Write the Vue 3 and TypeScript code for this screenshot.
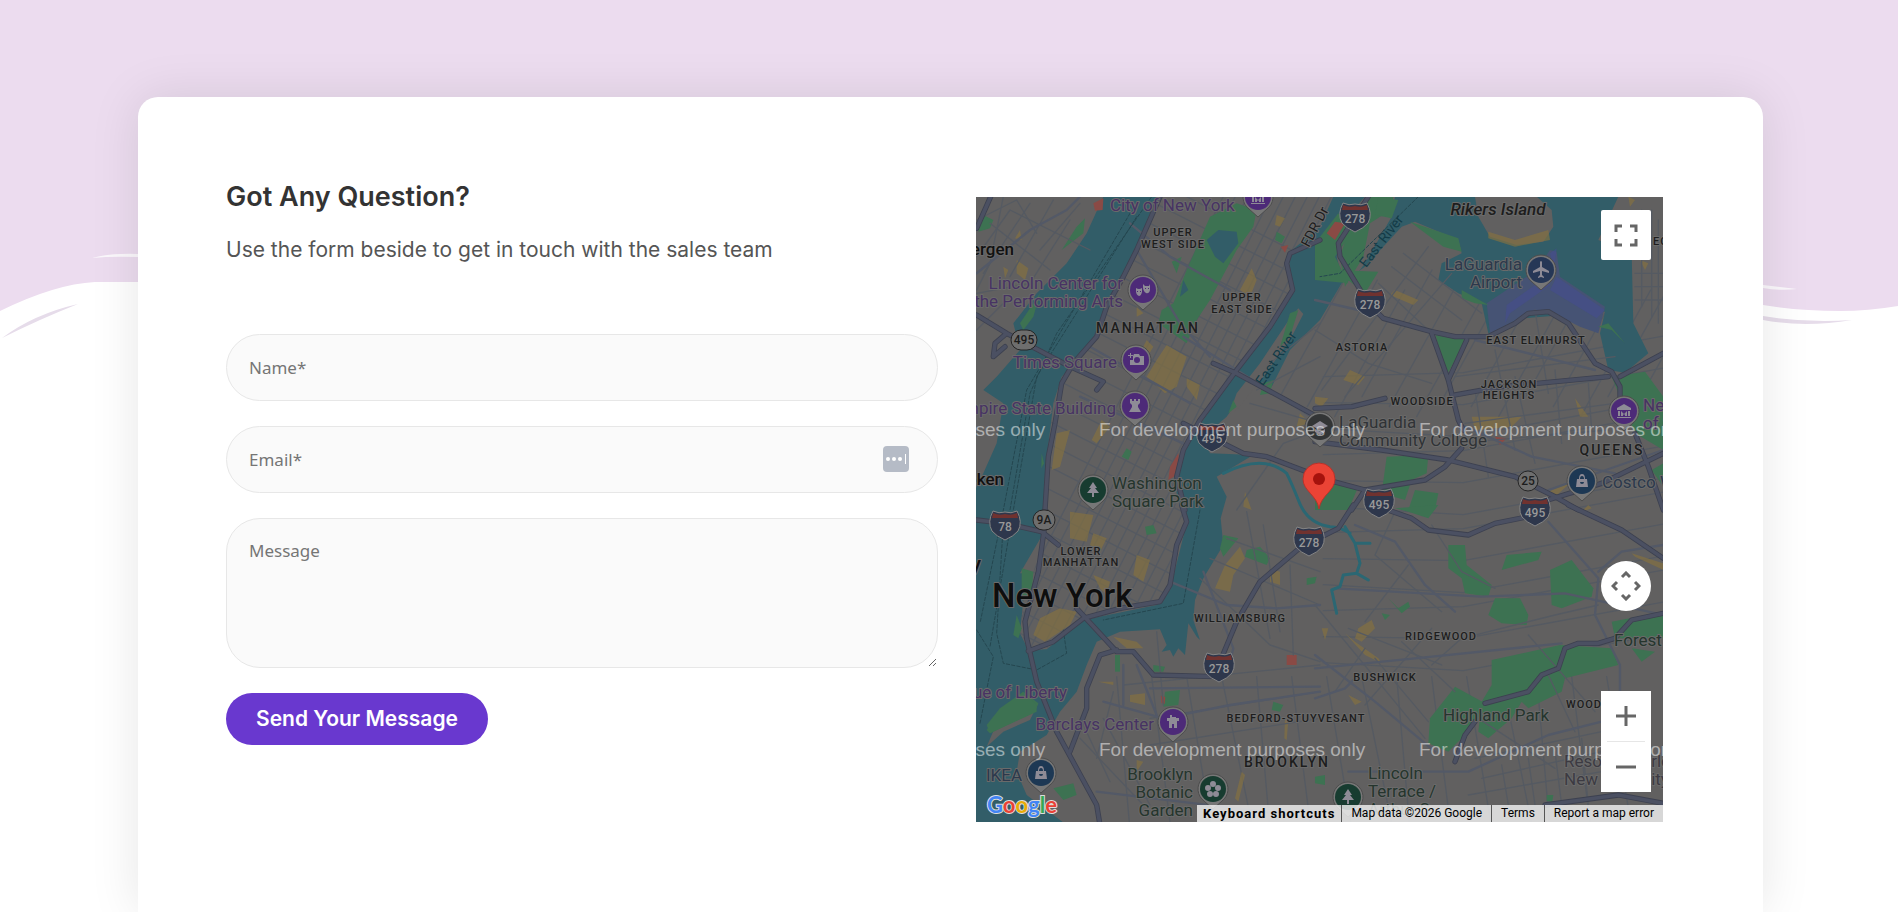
<script setup lang="ts">
import { ref } from 'vue'

interface Label {
  t: string[]
  x: number
  y: number
  k: string
  a?: 'start' | 'middle' | 'end'
  h?: number
  r?: number
}
interface Tile {
  x: number
  y: number
  parks: string[]
  sand: string[]
  red: string[]
  streets: string[]
  roads: string[]
  highways: string[]
}

const name = ref('')
const email = ref('')
const message = ref('')

const water = [
  'M400 20 L350 130 290 220 200 310 130 400 150 480 80 560 40 600 100 640 80 760 40 850 0 930 0 1905 290 1905 170 1815 140 1745 150 1685 230 1635 270 1565 320 1505 350 1425 380 1355 450 1325 570 1318 590 1365 575 1385 600 1380 610 1400 625 1375 645 1395 655 1300 640 1275 680 1340 690 1350 670 1290 675 1230 700 1165 760 1065 752 985 770 920 740 860 850 795 720 790 700 740 770 680 850 565 905 590 960 480 1050 390 1115 280 1185 230 1295 110 1335 95 1465 150 1475 190 1415 220 1405 270 1465 310 1535 340 1555 430 1655 385 1905 365 1890 430 1915 540 1965 548 2035 490 1990 400 1985 190 1885 150 1945 20 1090 20 1050 110 955 190 968 300 900 400 800 540 700 690 640 770 610 880 650 1000 600 1200 560 1245 340 1290 230 1378 175 1380 150 1330 160 1230 190 1150 150 1150 220 1030 225 850 250 640 275 560 360 470 400 370 470 250 500 170 560 20 Z'
]
const islands = [
  'M778 672 L800 610 870 520 950 400 985 355 1000 372 960 450 880 560 800 660 Z',
  'M1125 90 L1185 20 1275 20 1265 80 1185 220 1125 300 1100 200 Z',
  'M1515 20 L1525 80 1560 140 1640 165 1720 155 1750 110 1745 60 1700 20 Z',
  'M50 1670 L80 1600 150 1530 205 1540 180 1590 100 1625 Z'
]
const manhattan =
  'M560 20 L500 170 470 250 400 370 360 470 275 560 250 640 225 850 220 1030 190 1150 160 1230 150 1330 175 1380 230 1378 340 1290 560 1245 600 1200 650 1000 610 880 640 770 700 690 800 540 900 400 968 300 955 190 1050 110 1090 20 Z'

const avenues = Array.from({ length: 26 }, (_, i) => `M${60 + i * 36} 1400 L${770 + i * 36} 0`)
const crossStreets = Array.from({ length: 25 }, (_, i) => `M100 ${-260 + i * 68} l1100 560`)
const eastStreets = Array.from({ length: 15 }, (_, i) => `M${930 + i * 82} ${620 + (i % 3) * 30} l210 -380`)
const southStreets = Array.from({ length: 15 }, (_, i) => `M${440 + i * 105} 1460 l${40 + (i % 4) * 18} 460`)
const queensStreets = Array.from({ length: 12 }, (_, i) => `M1060 ${560 + i * 78} l420 ${(i % 3) * 18 - 12} 600 -110`)

const tiles: Tile[] = [
  {
    x: 0, y: 0,
    parks: ['M720 80 L800 40 860 60 850 110 800 180 720 330 680 390 650 460 565 400 575 360 610 340 650 240 Z', 'M605 215 L635 200 620 250 Z', 'M40 75 L70 90 60 115 25 125 Z', 'M345 85 L340 130 275 180 320 110 Z', 'M210 310 L190 380 160 420 150 400 Z', 'M470 775 L485 785 475 810 455 800 Z', 'M880 580 L910 570 900 610 870 615 Z', 'M790 630 L800 650 775 670 Z', 'M215 790 L222 820 214 835 Z', 'M920 125 l25 15 -10 20 -20 -10 Z'],
    sand: ['M530 450 L550 470 530 505 510 490 Z', 'M590 465 L650 500 620 590 585 610 530 560 560 510 Z', 'M650 565 L690 585 680 630 650 590 Z', 'M845 235 L860 270 840 320 810 300 Z', 'M920 75 L945 85 930 110 915 105 Z', 'M140 210 L175 235 165 270 140 250 Z', 'M260 730 L300 720 270 830 245 840 Z', 'M150 120 L155 150 135 145 Z', 'M395 690 L420 710 380 760 365 750 Z', 'M990 670 L1020 700 980 710 Z', 'M500 350 L520 370 500 380 Z', 'M825 905 L845 960 820 950 Z', 'M100 230 L115 240 105 265 Z'],
    red: ['M370 40 L400 25 398 60 375 62 Z', 'M625 790 L630 850 595 870 600 830 Z', 'M932 170 L955 165 945 188 Z'],
    streets: ['M20 200 L120 60 360 180', 'M60 100 L240 240 M20 310 L180 280 300 90', 'M20 90 L140 30 200 130 M100 20 L60 220 20 300', 'M840 640 L1050 700 M900 520 L1050 400 M860 600 L1050 500', 'M800 960 L940 760 1050 720', 'M40 250 L180 40 M20 420 L110 330 M250 30 L120 260 M330 40 L210 180'],
    roads: ['M640 440 L1040 690', 'M480 100 L600 200 780 300', 'M500 180 L630 400 720 500', 'M360 470 L660 640 M330 620 L640 760', 'M20 250 L180 120 290 60 330 20'],
    highways: ['M62 20 L20 115', 'M20 375 L110 430 300 530 400 575 380 600 M110 430 L75 460 70 500 105 470', 'M570 20 L535 100 500 180 460 260 410 350 380 440 310 520 275 580 255 700 235 800 225 960', 'M1050 150 L960 190 950 220 968 300 900 410 800 540 690 690 640 780 620 860 645 960', 'M730 520 L800 550 1060 690', 'M640 700 L820 790 890 800 1050 860']
  },
  {
    x: 1035, y: 0,
    parks: ['M0 160 L70 70 110 130 60 200 100 280 0 270 Z', 'M190 20 L250 30 230 85 180 75 Z', 'M360 430 L455 450 395 555 Z', 'M285 95 L430 145 440 185 385 170 Z', 'M440 300 L520 345 480 340 440 325 Z', 'M215 800 L340 795 335 850 290 870 270 930 200 910 Z', 'M0 870 L130 890 100 960 0 960 Z', 'M890 560 L990 545 1045 620 1045 780 960 730 Z', 'M850 410 L880 400 930 460 890 420 Z', 'M1010 840 L1045 820 1045 890 Z', 'M300 900 L370 910 360 960 280 960 Z', 'M60 240 L190 245 150 310 Z'],
    sand: ['M240 300 L310 330 295 345 225 315 Z', 'M105 540 L150 560 130 585 85 570 Z', 'M470 680 L620 680 590 710 480 720 Z', 'M780 625 L820 680 795 680 Z', 'M520 125 L600 150 700 120 705 150 600 170 520 145 Z', 'M0 620 L40 625 20 650 0 640 Z', 'M975 210 L1000 220 990 240 Z', 'M940 20 L960 30 945 50 Z', 'M700 905 L765 880 720 920 Z'],
    red: ['M60 95 L90 100 60 150 35 130 Z', 'M540 740 L575 745 555 765 Z'],
    streets: ['M190 280 L350 430 M230 230 L440 390 M265 190 L500 370', 'M20 600 L340 170 M90 620 L410 250', 'M420 560 L900 500 M450 700 L900 640 M420 760 L880 720', 'M480 600 L520 860 M600 560 L660 820 M720 540 L740 760 M820 580 L830 720', 'M960 250 L1045 250 M960 290 L1045 290 M980 60 L980 350 M1010 60 L1010 380 M1030 90 L1030 400 M960 330 L1045 330', 'M0 420 L160 520 350 580 M540 480 L600 780 M660 360 L700 610'],
    roads: ['M480 450 L840 540', 'M0 330 L130 360', 'M430 700 L650 800 900 850', 'M0 740 L120 700 M700 900 L1045 780'],
    highways: ['M160 20 L70 160 75 200 160 340 205 385 350 425 420 440 520 440 600 400 640 370 700 365 760 400 840 520 890 545 915 590 915 640', 'M915 560 L1045 490', 'M350 430 L400 570 430 690 445 720 M455 450 L400 570', 'M0 655 L110 650 210 625 M420 615 L560 590 880 560', 'M0 755 L200 780 400 810 600 860 720 920 790 960', 'M0 860 L150 900 330 870 390 830 440 775', 'M150 900 L110 960 M650 945 L860 880 1045 790 M960 730 L1000 830 1045 960']
  },
  {
    x: 0, y: 945,
    parks: ['M760 90 L805 100 760 155 750 130 Z', 'M830 135 L870 125 900 160 890 180 825 155 Z', 'M525 65 L550 60 560 85 530 90 Z', 'M50 660 L90 610 160 560 200 600 200 620 60 685 Z', 'M585 560 L630 555 625 600 580 605 Z', 'M140 330 L155 370 145 400 130 390 Z', 'M250 850 L310 835 320 870 280 885 Z', 'M435 450 L450 450 450 500 435 500 Z', 'M1010 220 L1040 215 1035 235 1010 240 Z', 'M910 590 L940 600 930 620 905 615 Z', 'M155 190 L190 200 185 270 155 280 Z', 'M550 480 L585 485 580 500 550 500 Z'],
    sand: ['M300 20 L370 30 350 110 300 100 Z', 'M270 310 L320 320 300 360 225 410 190 390 210 340 Z', 'M810 125 L825 160 790 210 780 260 735 250 765 180 Z', 'M500 150 L540 165 520 230 490 210 Z', 'M430 395 L500 410 520 430 470 430 Z', 'M480 570 L525 565 525 600 480 590 Z', 'M900 190 L930 200 930 240 900 230 Z', 'M370 210 L420 230 410 270 390 250 Z', 'M815 800 L825 810 805 890 795 880 Z', 'M385 530 L430 530 430 540 Z', 'M945 640 L955 645 950 705 943 700 Z', 'M370 85 L410 100 390 140 360 120 Z', 'M500 765 L520 770 500 800 Z'],
    red: ['M950 450 L980 450 980 480 950 480 Z', 'M572 572 L586 576 584 597 574 594 Z'],
    streets: ['M690 220 L900 420 1050 470', 'M720 160 L1050 300 M770 100 L1050 200', 'M460 540 L1050 480 M540 640 L1050 560 M540 720 L1050 640 M340 660 L420 830 M400 640 L540 900', 'M830 20 L900 400 M960 180 L970 450 M880 60 L930 380', 'M330 700 L520 900 M430 560 L380 760 M560 380 L580 600'],
    roads: ['M600 230 L770 300 920 310 1050 300', 'M700 200 L790 430 770 510', 'M460 480 L460 600 M500 480 L560 630', 'M540 550 L1050 545 M400 590 L580 640 780 600 1050 560', 'M380 860 L1050 940'],
    highways: ['M20 45 L105 55 215 80 265 120', 'M230 20 L205 200 165 350 170 400 200 530 260 680 380 900 390 960', 'M635 0 L650 50 620 120 600 240 570 290 450 310 340 340 250 410 175 438', 'M1000 120 L870 230 800 350 750 470', 'M320 310 L440 440 490 440 550 510 740 515', 'M440 435 L390 450 350 550 350 610 300 740']
  },
  {
    x: 1035, y: 945,
    parks: ['M400 120 L450 120 455 180 530 240 520 275 450 265 440 220 400 190 Z', 'M575 150 L680 140 670 165 560 195 Z', 'M705 195 L770 165 835 250 830 275 740 310 710 300 Z', 'M540 280 L615 280 640 330 635 360 560 355 520 330 Z', 'M530 465 L735 420 890 430 910 480 750 520 740 560 640 610 620 590 590 640 520 700 490 680 500 590 530 540 Z', 'M420 545 L520 600 440 700 400 740 340 715 345 640 Z', 'M890 350 L1045 320 1045 400 900 400 Z', 'M220 280 L250 310 280 290 285 305 260 325 Z', 'M0 815 L30 810 30 840 0 835 Z', 'M950 430 L1020 440 980 470 Z', 'M200 325 L225 330 210 345 Z', 'M240 10 L370 0 340 40 280 20 Z', 'M695 870 L715 870 712 890 695 888 Z'],
    sand: ['M130 370 L170 345 180 370 140 410 120 400 Z', 'M90 385 L120 410 190 460 200 475 150 450 Z', 'M20 370 L40 370 30 405 Z', 'M950 145 L1045 175 1045 195 960 155 Z', 'M100 570 L140 590 120 600 Z', 'M800 20 L820 0 830 10 Z'],
    red: [],
    streets: ['M350 480 L440 400 720 330 850 300', 'M280 180 L150 350 M350 60 L440 200 540 250', 'M0 300 L330 700 M100 370 L380 480 M150 430 L60 560 M350 370 L150 600', 'M480 760 L860 680 M500 820 L860 740 M460 870 L860 800', 'M640 390 L840 620 M700 510 L780 680 M490 640 L720 790', 'M180 460 L340 650 M260 410 L420 560 M240 20 L180 150 380 320', 'M560 780 L580 900 M640 760 L660 900 M720 740 L740 900 M800 700 L820 900'],
    roads: ['M60 250 L500 275 750 265 1045 330', 'M0 490 L300 460 740 415', 'M120 60 L240 110 330 240 420 320', 'M700 50 L850 220 840 330 915 480 915 600', 'M0 450 L180 590 360 740', 'M100 800 L460 800 700 690 860 650', 'M0 580 L90 550 120 520', 'M850 200 L920 140 1045 120'],
    highways: ['M0 105 L70 70 115 0', 'M190 5 L290 40 340 75 460 90 540 55 640 35', 'M760 0 L920 75 1045 160', 'M1045 325 L950 345 900 400 850 415 790 415 750 430 730 490 680 510 640 560 510 595 M480 650 L450 690 420 770', 'M690 900 L910 870 1045 895']
  }
]

const L = (k: string, x: number, y: number, t: string[], a: Label['a'] = 'start', h = 18, r = 0): Label => ({ k, x, y, t, a, h, r })
const labels: Label[] = [
  L('poi purple', 134, 14, ['City of New York']),
  L('area', 197, 39, ['UPPER', 'WEST SIDE'], 'middle', 12),
  L('city', 38, 58, ['Bergen'], 'end'),
  L('poi purple', 147, 92, ['Lincoln Center for', 'the Performing Arts'], 'end'),
  L('boro', 172, 136, ['MANHATTAN'], 'middle'),
  L('poi purple', 141, 171, ['Times Square'], 'end'),
  L('poi purple', 140, 217, ['Empire State Building'], 'end'),
  L('area', 266, 104, ['UPPER', 'EAST SIDE'], 'middle', 12),
  L('river', 304, 164, ['East River'], 'middle', 0, -56),
  L('river', 409, 47, ['East River'], 'middle', 0, -52),
  L('lane', 343, 32, ['FDR Dr'], 'middle', 0, -62),
  L('poi green', 136, 292, ['Washington', 'Square Park']),
  L('city', 28, 288, ['Hoboken'], 'end'),
  L('poi gray', 363, 231, ['LaGuardia', 'Community College']),
  L('island', 522, 18, ['Rikers Island'], 'middle'),
  L('poi blue', 546, 73, ['LaGuardia', 'Airport'], 'end'),
  L('area', 560, 147, ['EAST ELMHURST'], 'middle'),
  L('area', 386, 154, ['ASTORIA'], 'middle'),
  L('area', 533, 191, ['JACKSON', 'HEIGHTS'], 'middle', 11),
  L('area', 446, 208, ['WOODSIDE'], 'middle'),
  L('boro', 636, 258, ['QUEENS'], 'middle'),
  L('area', 677, 48, ['ECHO']),
  L('poi purple', 667, 214, ['New York Hall', 'of Science']),
  L('poi blue', 626, 291, ['Costco Wholesale']),
  L('area', 105, 358, ['LOWER', 'MANHATTAN'], 'middle', 11),
  L('town', 5, 374, ['Jersey City'], 'end'),
  L('metro', 16, 410, ['New York']),
  L('area', 264, 425, ['WILLIAMSBURG'], 'middle'),
  L('poi purple', 91, 501, ['Statue of Liberty'], 'end'),
  L('poi purple', 178, 533, ['Barclays Center'], 'end'),
  L('area', 320, 525, ['BEDFORD-STUYVESANT'], 'middle'),
  L('boro', 311, 570, ['BROOKLYN'], 'middle'),
  L('poi blue', 46, 584, ['IKEA'], 'end'),
  L('poi green', 217, 583, ['Brooklyn', 'Botanic', 'Garden'], 'end'),
  L('area', 465, 443, ['RIDGEWOOD'], 'middle'),
  L('area', 409, 484, ['BUSHWICK'], 'middle'),
  L('poi green', 638, 449, ['Forest Park']),
  L('poi green', 467, 524, ['Highland Park']),
  L('area', 590, 511, ['WOODHAVEN']),
  L('poi dim', 588, 570, ['Resorts World', 'New York City']),
  L('poi green', 392, 582, ['Lincoln', 'Terrace /', 'Arthur S…'])
]

const pins = [
  { x: 282, y: 0, c: '#4d2a78', i: 'museum' },
  { x: 167, y: 93, c: '#4d2a78', i: 'masks' },
  { x: 160, y: 163, c: '#4d2a78', i: 'camera' },
  { x: 159, y: 209, c: '#4d2a78', i: 'rook' },
  { x: 117, y: 293, c: '#173c30', i: 'tree' },
  { x: 344, y: 230, c: '#333536', i: 'school' },
  { x: 565, y: 73, c: '#263756', i: 'plane' },
  { x: 648, y: 214, c: '#4d2a78', i: 'museum' },
  { x: 606, y: 284, c: '#1d3854', i: 'bag' },
  { x: 65, y: 576, c: '#1d3854', i: 'bag' },
  { x: 197, y: 525, c: '#4d2a78', i: 'arena' },
  { x: 237, y: 592, c: '#173c30', i: 'flower' },
  { x: 372, y: 600, c: '#173c30', i: 'tree' }
]
const glyphs: Record<string, string> = {
  museum: 'M-7 -3 L0 -7 7 -3 V-1 H-7 Z M-6 0 H-4 V5 H-6 Z M4 0 H6 V5 H4 Z M-3 5 V0 L0 3 3 0 V5 H1 V3 L0 4 -1 3 V5 Z M-7 6 H7 V7 H-7 Z',
  masks: 'M-7 -2 Q-4 0 -1 -2 V2 Q-2 6 -4 6 Q-7 5 -7 1 Z M-6 1 h1 v1 h-1 Z M-3 1 h1 v1 h-1 Z M0 -6 L2 -4 H6 L7 -6 V0 Q6 4 3 3 Q0 1 0 -3 Z M2 -2 h1 v1 h-1 Z M5 -2 h1 v1 h-1 Z',
  camera: 'M-3 -4 L-2 -6 H3 L4 -4 H8 V5 H-6 V0 H-3 Z M-6 -7 H-5 V-5 H-3 V-4 H-5 V-2 H-6 V-4 H-8 V-5 H-6 Z M1 -3 A3 3 0 1 0 1 3 A3 3 0 1 0 1 -3 Z',
  rook: 'M-5 -7 H-3 V-5 H-1 V-7 H1 V-5 H3 V-7 H5 V-3 L3 -1 V1 L6 6 H-6 L-3 1 V-1 L-5 -3 Z',
  tree: 'M0 -8 L4 -2 H2 L6 3 H1 V7 H-1 V3 H-6 L-2 -2 H-4 Z',
  school: 'M-8 -1 L0 -6 8 -1 0 3 Z M-5 2 L0 5 5 2 V5 L0 8 -5 5 Z',
  plane: 'M-1 -8 Q0 -10 1 -8 V-3 L8 1 V3 L1 1 V5 L3 7 V8 L0 7 -3 8 V7 L-1 5 V1 L-8 3 V1 L-1 -3 Z',
  bag: 'M-5 -2 H-3 Q-3 -7 0 -7 Q3 -7 3 -2 H5 L6 6 H-6 Z M-2 -2 H2 Q2 -5 0 -5 Q-2 -5 -2 -2 Z M-2 1 H2 Q2 3 0 3 Q-2 3 -2 1 Z',
  arena: 'M-6 -4 H-3 V-7 H-1 V-5 H3 V-4 H6 V-1 H4 V6 H1 V2 H-1 V6 H-4 V-1 H-6 Z',
  flower: 'M-3 -5a3 3 0 1 0 6 0a3 3 0 1 0 -6 0Z M2 -1a3 3 0 1 0 6 0a3 3 0 1 0 -6 0Z M0 5a3 3 0 1 0 6 0a3 3 0 1 0 -6 0Z M-6 5a3 3 0 1 0 6 0a3 3 0 1 0 -6 0Z M-8 -1a3 3 0 1 0 6 0a3 3 0 1 0 -6 0Z'
}
const shields = [
  { x: 379, y: 20, n: '278' },
  { x: 394, y: 106, n: '278' },
  { x: 236, y: 240, n: '495' },
  { x: 403, y: 306, n: '495' },
  { x: 559, y: 314, n: '495' },
  { x: 29, y: 328, n: '78' },
  { x: 333, y: 344, n: '278' },
  { x: 243, y: 470, n: '278' }
]
const routes = [
  { x: 48, y: 143, w: 26, n: '495' },
  { x: 552, y: 284, w: 20, n: '25' },
  { x: 68, y: 323, w: 22, n: '9A' }
]
const marks = [-197, 123, 443]
</script>

<template>
  <main class="page">
    <svg class="wave" viewBox="0 0 1898 360" preserveAspectRatio="none" aria-hidden="true">
      <path fill="#ecdcef" d="M0 0H1898V306Q1868 311 1840 311Q1800 311 1763 305L138 282H95Q55 284 0 311Z" />
      <path fill="#fff" fill-opacity=".8" d="M92 258Q110 253 138 254V257Q112 256 92 258Z M1763 285L1797 289Q1780 291 1763 288Z" />
      <path fill="#e6dcea" d="M2 338Q34 314 78 304Q40 319 2 338Z M1763 316Q1805 323 1852 320Q1805 328 1763 320Z" />
    </svg>

    <section class="card">
      <div class="intro">
        <h2>Got Any Question?</h2>
        <p>Use the form beside to get in touch with the sales team</p>
        <form @submit.prevent>
          <input v-model="name" type="text" placeholder="Name*" aria-label="Name" />
          <div class="field">
            <input v-model="email" type="email" placeholder="Email*" aria-label="Email" />
            <button type="button" class="autofill" aria-label="Fill from password manager">
              <svg width="26" height="26" viewBox="0 0 26 26">
                <rect width="26" height="26" rx="4" fill="#b5bbc6" />
                <g fill="#fff">
                  <circle cx="5" cy="13" r="2" /><circle cx="11" cy="13" r="2" /><circle cx="17" cy="13" r="2" />
                  <rect x="22" y="8" width="1" height="10" />
                </g>
              </svg>
            </button>
          </div>
          <textarea v-model="message" placeholder="Message" aria-label="Message"></textarea>
          <button type="submit" class="send">Send Your Message</button>
        </form>
      </div>

      <div class="map">
        <svg class="canvas" viewBox="0 0 687 625" preserveAspectRatio="xMidYMid slice" role="img" aria-label="Map of New York">
          <defs>
            <clipPath id="manhattan"><path :d="manhattan" /></clipPath>
          </defs>
          <rect width="687" height="625" fill="#616060" />
          <g transform="translate(-6 -7) scale(.33333)">
            <path v-for="d in queensStreets" :key="d" :d="d" class="line street" />
            <path v-for="d in southStreets" :key="d" :d="d" class="line street" />
            <path v-for="d in eastStreets" :key="d" :d="d" class="line street" />
            <path v-for="d in water" :key="d" :d="d" fill="#325d68" />
            <path v-for="d in islands" :key="d" :d="d" fill="#616060" />
            <path fill="#3d7252" d="M50 1620L90 1560 160 1505 205 1540 195 1565 60 1630ZM1110 200L1140 110 1190 20 1270 20 1262 60 1200 100 1180 200 1125 290ZM960 370L985 360 960 440 930 470Z" />
            <path fill="#465374" d="M1550 340L1700 240 1740 180 1760 185 1770 260 1905 350 1885 430 1830 410 1740 365 1660 380 1560 430Z" />
            <path fill="#434c93" fill-opacity=".5" d="M1610 345L1730 260 1740 285 1620 370 1605 400ZM1760 260L1905 360 1880 385 1740 300ZM1740 190L1760 175 1752 240Z" />
            <g clip-path="url(#manhattan)">
              <path v-for="d in avenues" :key="d" :d="d" class="line street" />
              <path v-for="d in crossStreets" :key="d" :d="d" class="line street" />
            </g>
            <g v-for="t in tiles" :key="`a${t.x}-${t.y}`" :transform="`translate(${t.x} ${t.y})`">
              <path v-for="d in t.parks" :key="d" :d="d" fill="#3d7252" />
              <path v-for="d in t.sand" :key="d" :d="d" fill="#85713f" fill-opacity=".65" />
              <path v-for="d in t.red" :key="d" :d="d" fill="#8a4a45" />
            </g>
            <path fill="#325d68" d="M745 120L800 125 805 160 760 220 735 200 710 150ZM640 270L655 300 630 320Z" />
            <g v-for="t in tiles" :key="`b${t.x}-${t.y}`" :transform="`translate(${t.x} ${t.y})`">
              <path v-for="d in t.streets" :key="d" :d="d" class="line street" />
              <path v-for="d in t.roads" :key="d" :d="d" class="line road" />
            </g>
            <path class="line creek" d="M760 850Q880 790 950 850 M950 850Q965 880 985 930 1010 1000 1080 1010 1110 1010 1140 1030 M1125 1010L1155 1060 1170 1120 1160 1150 1120 1155 1110 1190 1085 1200 1100 1270 M1160 1060L1200 1060 M1160 1150L1195 1170" />
            <path class="line ferry" d="M545 20L260 430 180 610 120 960 M480 70L170 600 100 960 30 1300 M500 80L200 560 130 960 60 1370 M100 1000L80 1330 100 1420 200 1440 290 1390 280 1320 M20 1320L70 1400 30 1600 M690 960L640 1240 400 1290 M1345 20L1110 250 1050 260" />
            <g v-for="t in tiles" :key="`c${t.x}-${t.y}`" :transform="`translate(${t.x} ${t.y})`">
              <path v-for="d in t.highways" :key="d" :d="d" class="line edge" />
            </g>
            <g v-for="t in tiles" :key="`d${t.x}-${t.y}`" :transform="`translate(${t.x} ${t.y})`">
              <path v-for="d in t.highways" :key="d" :d="d" class="line highway" />
            </g>
          </g>

          <g v-for="s in shields" :key="`${s.x}${s.y}`" :transform="`translate(${s.x} ${s.y})`">
            <path d="M-12 -14Q-6 -11 0 -13Q6 -11 12 -14Q18 -3 13 6Q9 11 0 15Q-9 11 -13 6Q-18 -3 -12 -14Z" fill="#2e374c" stroke="#858585" />
            <path d="M-12 -12Q-6 -9 0 -11Q6 -9 12 -12L13 -7H-13Z" fill="#70322f" />
            <text class="num light" y="6">{{ s.n }}</text>
          </g>
          <g v-for="s in routes" :key="s.n" :transform="`translate(${s.x} ${s.y})`">
            <rect :x="-s.w / 2" y="-10" :width="s.w" height="20" rx="10" fill="#6e6e6e" stroke="#262626" />
            <text class="num" y="4">{{ s.n }}</text>
          </g>

          <text
            v-for="l in labels"
            :key="l.t[0] + l.x"
            :class="['label', l.k]"
            :text-anchor="l.a"
            :transform="`translate(${l.x} ${l.y}) rotate(${l.r})`"
          ><tspan v-for="(line, i) in l.t" :key="line" x="0" :y="i * (l.h || 0)">{{ line }}</tspan></text>

          <g v-for="p in pins" :key="`${p.x}-${p.y}`" :transform="`translate(${p.x} ${p.y})`">
            <path d="M0 20L-9 12A15 15 0 1 1 9 12Z" fill="#777" stroke="#4d4d4d" />
            <circle r="13" :fill="p.c" />
            <path :d="glyphs[p.i]" fill="#8e8b96" fill-rule="evenodd" />
          </g>

          <g class="watermark">
            <template v-for="x in marks" :key="x">
              <text :x="x" y="239">For development purposes only</text>
              <text :x="x" y="559">For development purposes only</text>
            </template>
          </g>

          <path d="M343 312C341 298 327 294 327 282A16 16 0 0 1 359 282C359 294 345 298 343 312Z" fill="#ea4335" stroke="#b8322a" />
          <circle cx="343" cy="282" r="6" fill="#a5120d" />
        </svg>

        <button type="button" class="control fullscreen" aria-label="Toggle fullscreen view">
          <svg width="24" height="24" viewBox="0 0 24 24" fill="none" stroke="#666" stroke-width="3">
            <path d="M8 3H2V9M16 3H22V9M8 22H2V16M16 22H22V16" />
          </svg>
        </button>
        <button type="button" class="control pan" aria-label="Map camera controls">
          <svg width="30" height="30" viewBox="0 0 30 30" fill="none" stroke="#666" stroke-width="3">
            <path d="M11 6L15 2 19 6M11 24L15 28 19 24M6 11L2 15 6 19M24 11L28 15 24 19" />
          </svg>
        </button>
        <div class="zoom">
          <button type="button" aria-label="Zoom in">
            <svg width="20" height="20" viewBox="0 0 20 20" stroke="#666" stroke-width="3"><path d="M0 10H20M10 0V20" /></svg>
          </button>
          <button type="button" aria-label="Zoom out">
            <svg width="20" height="20" viewBox="0 0 20 20" stroke="#666" stroke-width="3"><path d="M0 10H20" /></svg>
          </button>
        </div>
        <a class="google" href="#" aria-label="Google"><span class="b">G</span><span class="r">o</span><span class="y">o</span><span class="b">g</span><span class="g">l</span><span class="r">e</span></a>
        <div class="legal">
          <button type="button">Keyboard shortcuts</button>
          <span>Map data ©2026 Google</span>
          <a href="#">Terms</a>
          <a href="#">Report a map error</a>
        </div>
      </div>
    </section>
  </main>
</template>

<style>
body {
  background: #fff;
}
</style>

<style scoped>
.page {
  position: relative;
  box-sizing: border-box;
  min-height: 100vh;
  padding: 97px 135px 0 138px;
  overflow: hidden;
  font-family: Inter, "Liberation Sans", sans-serif;
}
.page *,
.page *::before {
  box-sizing: border-box;
}
.wave {
  position: absolute;
  top: 0;
  left: 0;
  width: 100%;
  height: 360px;
}
.card {
  position: relative;
  display: grid;
  grid-template-columns: 712fr 687fr;
  gap: 38px;
  align-items: start;
  padding: 76px 100px 90px 88px;
  background: #fff;
  border-radius: 20px 20px 0 0;
  box-shadow: 0 0 50px rgba(0, 0, 0, 0.1);
}
h2 {
  margin: 8px 0 0;
  color: #333;
  font-size: 27px;
  font-weight: 600;
  line-height: 32px;
}
p {
  margin: 22px 0 0;
  color: #555;
  font-size: 21px;
  line-height: 30px;
}
form {
  display: flex;
  flex-direction: column;
  align-items: flex-start;
  gap: 25px;
  margin-top: 69px;
}
.field {
  position: relative;
  width: 100%;
}
input,
textarea {
  display: block;
  width: 100%;
  height: 67px;
  margin: 0;
  padding: 0 22px;
  border: 1px solid #e7e7e7;
  border-radius: 34px;
  outline: 0;
  background: #fafafa;
  color: #333;
  font: 17px/24px "Noto Sans", sans-serif;
}
textarea {
  height: 150px;
  padding-top: 20px;
  resize: both;
}
input::placeholder,
textarea::placeholder {
  color: #757575;
  opacity: 1;
}
.autofill {
  position: absolute;
  top: 20px;
  right: 29px;
  display: flex;
  padding: 0;
  border: 0;
  background: none;
}
.send {
  height: 52px;
  padding: 0 30px;
  border: 0;
  border-radius: 26px;
  background: #6938cf;
  color: #fff;
  font: 600 21px/24px Inter, sans-serif;
}
.map {
  position: relative;
  height: 625px;
  margin-top: 24px;
  overflow: hidden;
  font-family: Roboto, sans-serif;
}
.canvas {
  display: block;
  width: 100%;
  height: 100%;
}
.line {
  fill: none;
  stroke-linecap: round;
  stroke-linejoin: round;
}
.street {
  stroke: #555a62;
  stroke-width: 4;
}
.road {
  stroke: #535967;
  stroke-width: 7;
}
.creek {
  stroke: #2b6773;
  stroke-width: 9;
}
.ferry {
  stroke: #24464f;
  stroke-width: 3;
  stroke-dasharray: 10 6;
}
.edge {
  stroke: #3d4150;
  stroke-width: 16;
}
.highway {
  stroke: #4b5062;
  stroke-width: 11;
}
.num {
  fill: #1c1c1c;
  font-size: 12px;
  font-weight: 500;
  text-anchor: middle;
}
.num.light {
  fill: #999;
}
.label {
  fill: #1d1d1d;
  stroke: #6a6a6a;
  stroke-width: 2px;
  stroke-linejoin: round;
  paint-order: stroke;
  font-size: 16px;
}
.area {
  font-size: 11px;
  font-weight: 500;
  letter-spacing: 1px;
}
.boro {
  font-size: 14px;
  font-weight: 500;
  letter-spacing: 2px;
}
.city {
  fill: #111;
  font-size: 17px;
  font-weight: 500;
}
.town {
  fill: #111;
  font-size: 21px;
  font-weight: 500;
}
.metro {
  fill: #0e0e0e;
  font-size: 33px;
  font-weight: 500;
}
.island {
  font-size: 17px;
  font-style: italic;
  font-weight: 500;
}
.river {
  fill: #133b47;
  stroke: none;
  font-size: 14px;
}
.lane {
  font-size: 14px;
}
.poi {
  font-size: 17px;
}
.purple {
  fill: #473363;
}
.green {
  fill: #25352d;
}
.gray {
  fill: #303336;
}
.dim {
  fill: #3c3a42;
}
.blue {
  fill: #2c394c;
}
.watermark {
  fill: #fff;
  fill-opacity: 0.5;
  font-family: "Liberation Sans", sans-serif;
  font-size: 19px;
}
.control,
.zoom {
  position: absolute;
  right: 12px;
  width: 50px;
  background: #fff;
}
.control {
  display: flex;
  align-items: center;
  justify-content: center;
  height: 50px;
  padding: 0;
  border: 0;
  border-radius: 2px;
}
.fullscreen {
  top: 13px;
}
.pan {
  bottom: 211px;
  border-radius: 50%;
}
.zoom {
  bottom: 30px;
}
.zoom button {
  display: flex;
  align-items: center;
  justify-content: center;
  width: 50px;
  height: 50px;
  padding: 0;
  border: 0;
  background: none;
}
.zoom button + button::before {
  position: absolute;
  top: 50px;
  right: 6px;
  left: 6px;
  height: 1px;
  background: #e6e6e6;
  content: "";
}
.zoom button + button {
  height: 51px;
}
.google {
  position: absolute;
  bottom: 2px;
  left: 11px;
  font: 700 22px/30px Lato, sans-serif;
  text-decoration: none;
  -webkit-text-stroke: 2px #ddd;
  paint-order: stroke fill;
}
.b {
  color: #4285f4;
}
.r {
  color: #e94235;
}
.y {
  color: #e8ab08;
}
.g {
  color: #34a853;
}
.legal {
  position: absolute;
  right: 0;
  bottom: 0;
  display: flex;
  height: 17px;
  background: rgba(245, 245, 245, 0.8);
  font-size: 12px;
  line-height: 17px;
  white-space: nowrap;
}
.legal > * {
  padding: 0 9px;
  border: 0;
  color: #000;
  text-decoration: none;
}
.legal > * + * {
  border-left: 1px solid #555;
}
.legal button {
  padding: 0 6px;
  background: none;
  font: 700 13px/17px Roboto, sans-serif;
  letter-spacing: 1px;
}
</style>
